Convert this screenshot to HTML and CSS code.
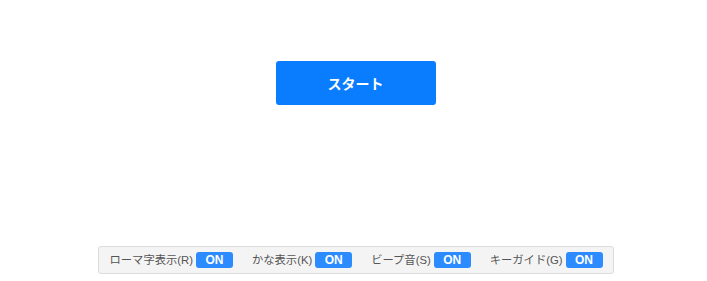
FILE: index.html
```html
<!DOCTYPE html>
<html lang="ja">
<head>
<meta charset="utf-8">
<link rel="stylesheet" href="styles.css">
</head>
<body>
<div class="page">
  <div class="main">
    <button class="start">スタート</button>
  </div>
  <div class="settings">
    <div class="item"><span class="label">ローマ字表示(R)</span><span class="badge">ON</span></div>
    <div class="item"><span class="label">かな表示(K)</span><span class="badge">ON</span></div>
    <div class="item"><span class="label">ビープ音(S)</span><span class="badge">ON</span></div>
    <div class="item"><span class="label">キーガイド(G)</span><span class="badge">ON</span></div>
  </div>
</div>
</body>
</html>
```
FILE: styles.css
```css
html, body {
  margin: 0;
  padding: 0;
  background: #ffffff;
}
.page {
  width: 707px;
  height: 281px;
  display: flex;
  flex-direction: column;
  align-items: center;
  padding-left: 4px;
  box-sizing: border-box;
  font-family: "Liberation Sans", "Noto Sans CJK JP", sans-serif;
}
.main {
  padding-top: 61px;
  height: 246px;
  box-sizing: border-box;
}
.start {
  display: block;
  width: 160px;
  height: 44px;
  border: none;
  border-radius: 3px;
  background: #0a7dff;
  color: #ffffff;
  font-family: "Liberation Sans", "Noto Sans CJK JP", sans-serif;
  font-size: 14px;
  font-weight: bold;
  padding: 0;
}
.settings {
  display: flex;
  align-items: center;
  justify-content: space-between;
  width: 516px;
  height: 28px;
  box-sizing: border-box;
  padding: 0 10px 0 11px;
  background: #f4f4f4;
  border: 1px solid #dcdcdc;
  border-radius: 3px;
}
.item {
  display: flex;
  align-items: center;
  gap: 3px;
}
.label {
  font-size: 11.3px;
  line-height: 16px;
  color: #555555;
}
.badge {
  display: inline-flex;
  align-items: center;
  justify-content: center;
  width: 37px;
  height: 16px;
  border-radius: 3px;
  background: #2b8bff;
  color: #ffffff;
  font-family: "Liberation Sans", sans-serif;
  font-size: 12px;
  font-weight: bold;
}
```
